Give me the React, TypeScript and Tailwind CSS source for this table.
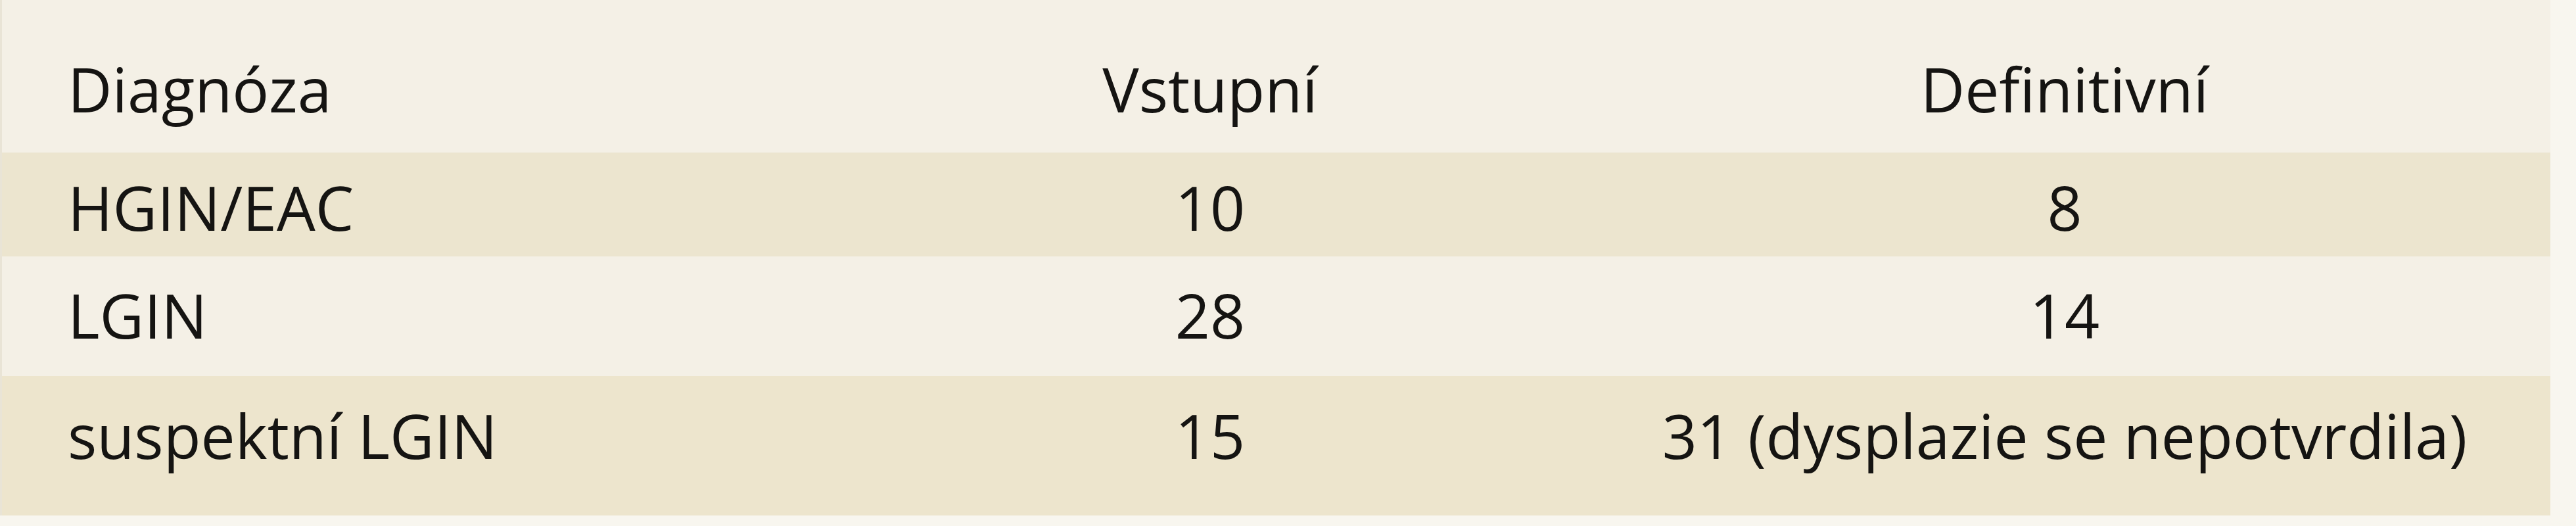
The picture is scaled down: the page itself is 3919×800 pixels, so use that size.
import React from "react";

const rows = [
  { d: "HGIN/EAC", v: "10", f: "8", h: "h-[158px]", pt: "pt-[37px]", bg: "bg-[#ece5cf]" },
  { d: "LGIN", v: "28", f: "14", h: "h-[182px]", pt: "pt-[43px]", bg: "bg-[#f4f0e6]" },
  { d: "suspektní LGIN", v: "15", f: "31 (dysplazie se nepotvrdila)", h: "h-[212px]", pt: "pt-[44px]", bg: "bg-[#ede5cd]" },
];

export default function App() {
  return (
    <div
      className="w-[3919px] h-[800px] bg-[#f8f6ef] text-[#151412] text-[93px] leading-none"
      style={{ fontFamily: '"Open Sans", "Noto Sans", sans-serif' }}
    >
      <div className="w-[3880px] border-l-[3px] border-[#e9e4d6] bg-[#f4f0e6]">
        <div className="grid grid-cols-[1277px_1122px_1fr] h-[232px] pt-[89px] bg-[#f4f0e6]">
          <div className="pl-[100px]">Diagnóza</div>
          <div className="text-center">Vstupní</div>
          <div className="text-center">Definitivní</div>
        </div>
        {rows.map((r) => (
          <div key={r.d} className={`grid grid-cols-[1277px_1122px_1fr] ${r.h} ${r.pt} ${r.bg}`}>
            <div className="pl-[100px]">{r.d}</div>
            <div className="text-center">{r.v}</div>
            <div className="text-center">{r.f}</div>
          </div>
        ))}
      </div>
    </div>
  );
}
